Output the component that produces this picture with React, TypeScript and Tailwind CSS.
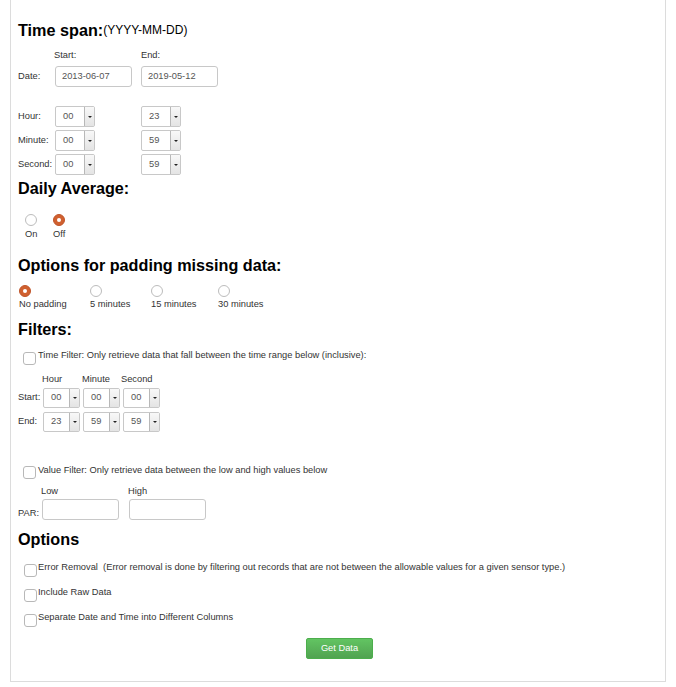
import React from "react";

const font = { fontFamily: '"Liberation Sans", Arial, sans-serif' };

function Sel({ v, w = "w-[40px]", h = "h-[21px]" }: { v: string; w?: string; h?: string }) {
  return (
    <div className={`${w} ${h} flex items-stretch border border-[#c8c8c8] rounded-[2px] bg-white`}>
      <div className="flex-1 flex items-center pl-[7px] text-[9.3px] text-[#555]">{v}</div>
      <div className="w-[10px] border-l border-[#b8b8b8] bg-gradient-to-b from-[#f8f8f8] to-[#e4e4e4] flex items-center justify-center">
        <div className="w-0 h-0 border-l-[2px] border-r-[2px] border-t-[2px] border-l-transparent border-r-transparent border-t-[#222]" />
      </div>
    </div>
  );
}

function Inp({ v, w = "w-[77px]" }: { v?: string; w?: string }) {
  return (
    <div className={`${w} h-[21px] border border-[#c8c8c8] rounded-[3px] bg-white flex items-center pl-[6px] text-[9.3px] text-[#555]`}>
      {v}
    </div>
  );
}

function Radio({ on }: { on?: boolean }) {
  return on ? (
    <div className="w-[12px] h-[12px] rounded-full bg-[#d0602f] border border-[#c0552a] flex items-center justify-center">
      <div className="w-[4px] h-[4px] rounded-full bg-white" />
    </div>
  ) : (
    <div className="w-[12px] h-[12px] rounded-full border border-[#bcbcbc] bg-white" />
  );
}

function Check() {
  return <div className="w-[13px] h-[13px] rounded-[3px] border border-[#b8b8b8] bg-white shrink-0" />;
}

function Heading({ children, mt }: { children: React.ReactNode; mt: string }) {
  return (
    <div className={`${mt} h-[20px] flex items-center text-[16.2px] font-bold text-black leading-none`}>{children}</div>
  );
}

export default function App() {
  return (
    <div className="w-[676px] h-[687px] bg-white" style={font}>
      <div className="ml-[10px] w-[656px] h-[682px] border-l border-r border-b border-[#dcdcdc] pl-[7px] text-[#333] text-[9.3px]">
        <Heading mt="pt-[20px] h-[40px]">
          Time span:<span className="text-[12px] font-normal">(YYYY-MM-DD)</span>
        </Heading>

        <div className="mt-[10px] h-[12px] flex items-center">
          <div className="ml-[36px] w-[87px]">Start:</div>
          <div>End:</div>
        </div>
        <div className="mt-[4px] h-[21px] flex items-center">
          <div className="w-[37px]">Date:</div>
          <Inp v="2013-06-07" />
          <div className="w-[9px]" />
          <Inp v="2019-05-12" />
        </div>

        {[
          ["Hour:", "00", "23"],
          ["Minute:", "00", "59"],
          ["Second:", "00", "59"],
        ].map(([l, a, b], i) => (
          <div key={l} className={`${i === 0 ? "mt-[19px]" : "mt-[3px]"} h-[21px] flex items-center`}>
            <div className="w-[37px]">{l}</div>
            <Sel v={a} />
            <div className="w-[46px]" />
            <Sel v={b} />
          </div>
        ))}

        <Heading mt="mt-[3px]">Daily Average:</Heading>
        <div className="mt-[16px] flex ml-[7px]">
          <div className="w-[28px] flex flex-col">
            <Radio />
            <div className="mt-[3px] h-[12px] flex items-center">On</div>
          </div>
          <div className="w-[28px] flex flex-col">
            <Radio on />
            <div className="mt-[3px] h-[12px] flex items-center">Off</div>
          </div>
        </div>

        <Heading mt="mt-[14px]">Options for padding missing data:</Heading>
        <div className="mt-[10px] flex ml-[1px]">
          {[
            ["No padding", true, "w-[71px]"],
            ["5 minutes", false, "w-[61px]"],
            ["15 minutes", false, "w-[67px]"],
            ["30 minutes", false, "w-[70px]"],
          ].map(([l, on, w]) => (
            <div key={l as string} className={`${w} flex flex-col`}>
              <Radio on={on as boolean} />
              <div className="mt-[2px] h-[12px] flex items-center">{l as string}</div>
            </div>
          ))}
        </div>

        <Heading mt="mt-[8px]">Filters:</Heading>
        <div className="mt-[10px] h-[17px] flex ml-[5px]">
          <div className="mt-[3px]"><Check /></div>
          <div className="mt-[1px] h-[12px] flex items-center ml-[2px]">
            Time Filter: Only retrieve data that fall between the time range below (inclusive):
          </div>
        </div>
        <div className="mt-[8px] h-[12px] flex items-center">
          <div className="ml-[24px] w-[40px]">Hour</div>
          <div className="w-[39px]">Minute</div>
          <div>Second</div>
        </div>
        {[
          ["Start:", "00", "00", "00", "mt-[2px]"],
          ["End:", "23", "59", "59", "mt-[4px]"],
        ].map(([l, a, b, c, mt]) => (
          <div key={l} className={`${mt} h-[20px] flex items-center`}>
            <div className="w-[25px]">{l}</div>
            <Sel v={a} w="w-[37px]" h="h-[20px]" />
            <div className="w-[3px]" />
            <Sel v={b} w="w-[37px]" h="h-[20px]" />
            <div className="w-[3px]" />
            <Sel v={c} w="w-[37px]" h="h-[20px]" />
          </div>
        ))}

        <div className="mt-[32px] h-[15px] flex ml-[5px]">
          <div className="mt-[2px]"><Check /></div>
          <div className="mt-[1px] h-[12px] flex items-center ml-[2px]">
            Value Filter: Only retrieve data between the low and high values below
          </div>
        </div>
        <div className="mt-[7px] h-[12px] flex items-center">
          <div className="ml-[23px] w-[87px]">Low</div>
          <div>High</div>
        </div>
        <div className="mt-[1px] h-[21px] flex items-center">
          <div className="w-[24px] mt-[8px]">PAR:</div>
          <Inp w="w-[77px]" />
          <div className="w-[10px]" />
          <Inp w="w-[77px]" />
        </div>

        <Heading mt="mt-[9px]">Options</Heading>
        {[
          ["Error Removal\u00a0\u00a0(Error removal is done by filtering out records that are not between the allowable values for a given sensor type.)", "mt-[12px]"],
          ["Include Raw Data", "mt-[10px]"],
          ["Separate Date and Time into Different Columns", "mt-[10px]"],
        ].map(([t, mt]) => (
          <div key={t} className={`${mt} h-[15px] flex ml-[6px]`}>
            <div className="mt-[3px]"><Check /></div>
            <div className="mt-[1px] h-[12px] flex items-center ml-[1px]">{t}</div>
          </div>
        ))}

        <div className="mt-[12px] flex justify-center pr-[4px]">
          <div className="w-[67px] h-[21px] rounded-[2px] bg-gradient-to-b from-[#62c462] to-[#51a351] border border-[#4cae4c] text-white text-[9.3px] flex items-center justify-center">
            Get Data
          </div>
        </div>
      </div>
    </div>
  );
}
